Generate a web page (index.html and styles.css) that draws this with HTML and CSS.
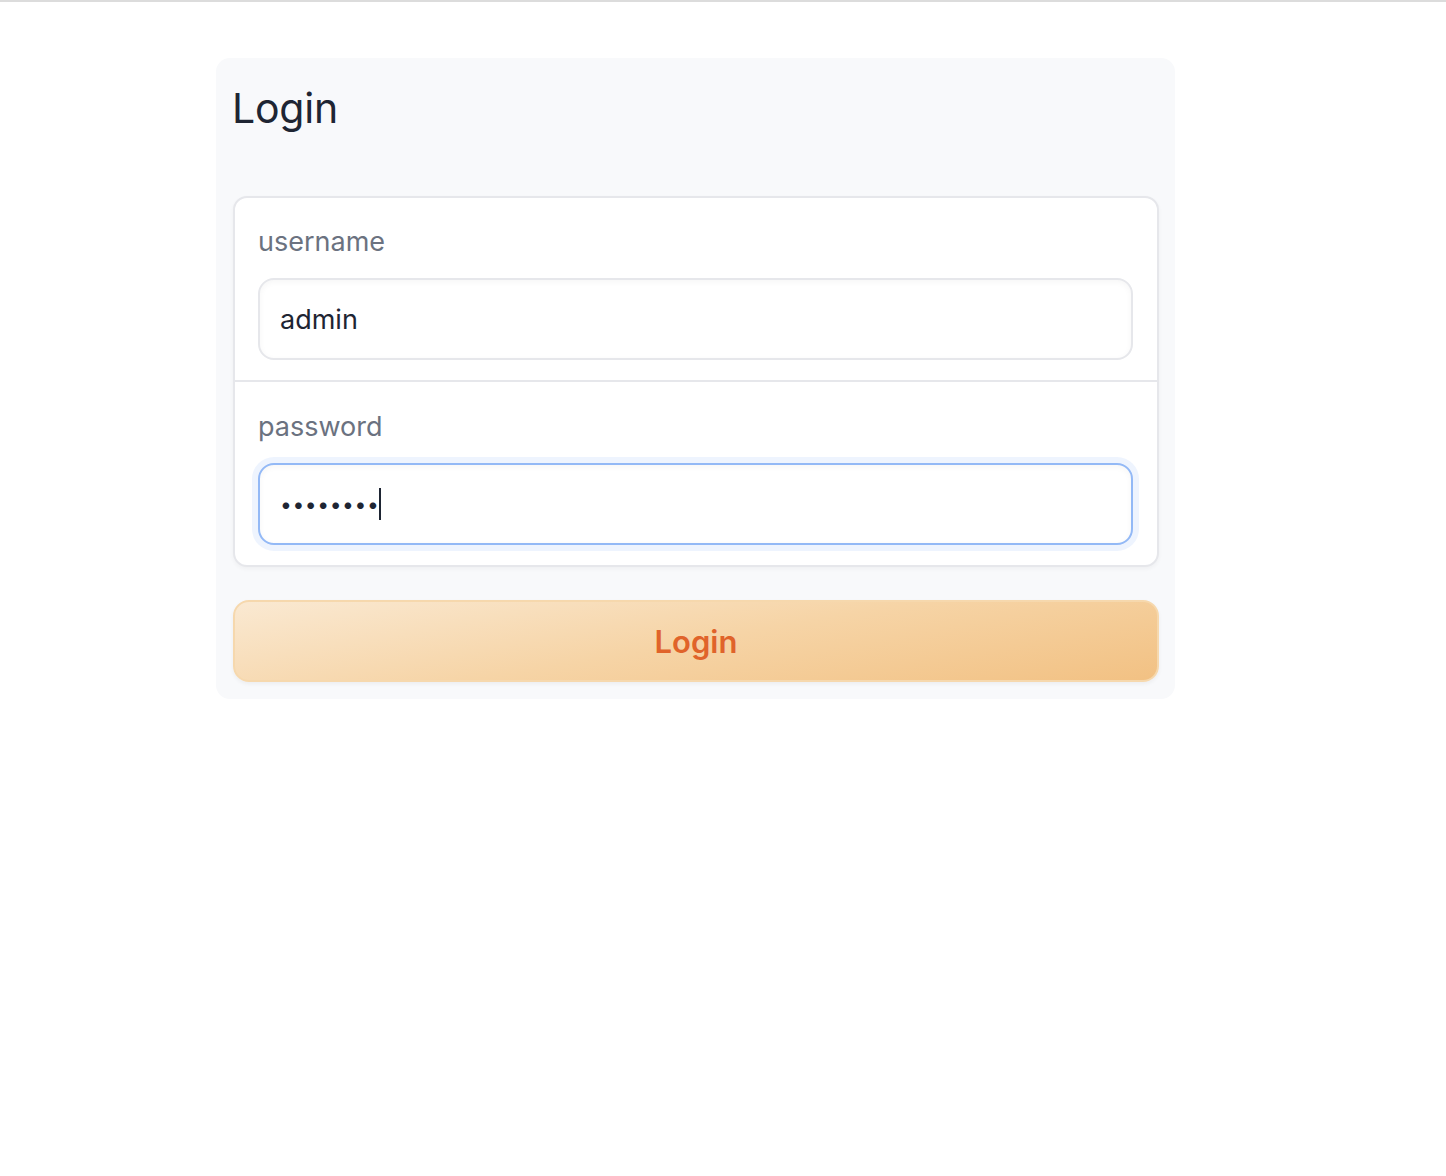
FILE: index.html
```html
<!DOCTYPE html>
<html lang="en">
<head>
<meta charset="utf-8">
<title>Login</title>
<link rel="stylesheet" href="styles.css">
</head>
<body>
<div class="topline"></div>
<main class="page">
  <section class="card">
    <h1 class="title">Login</h1>
    <form class="form">
      <div class="fields">
        <div class="field">
          <label class="label" for="u">username</label>
          <div class="input">admin</div>
        </div>
        <div class="field">
          <label class="label" for="p">password</label>
          <div class="input focused"><span class="dots">••••••••</span><span class="caret"></span></div>
        </div>
      </div>
      <button type="button" class="btn">Login</button>
    </form>
  </section>
</main>
</body>
</html>
```
FILE: styles.css
```css
* { box-sizing: border-box; }
html, body { margin: 0; padding: 0; background: #ffffff; }
body { font-family: Inter, "Noto Sans", sans-serif; color: #1f2937; }
.topline { height: 2px; background: #dcdcdc; }
.page { padding: 56px 0 0 216px; }
.card {
  width: 959px;
  background: #f8f9fb;
  border-radius: 14px;
  padding: 16px 16px 17px 16px;
}
.title {
  margin: 0;
  font-size: 41px;
  font-weight: 400;
  line-height: 68px;
  color: #1e2533;
  letter-spacing: -0.2px;
}
.form { margin-top: 54px; display: flex; flex-direction: column; gap: 33px; }
.fields {
  margin-left: 1px;
  background: #fff;
  border: 2px solid #e6e7eb;
  border-radius: 14px;
  box-shadow: 0 2px 4px rgba(0,0,0,0.04);
}
.field { padding: 26px 24px 20px 23px; }
.field + .field { border-top: 2px solid #e6e7eb; padding-top: 27px; }
.label {
  display: block;
  font-size: 27px;
  line-height: 36px;
  color: #6b7280;
  margin-bottom: 18px;
}
.input {
  height: 82px;
  border: 2px solid #e6e7eb;
  border-radius: 16px;
  background: #fff;
  box-shadow: inset 0 2px 6px rgba(0,0,0,0.04);
  padding: 0 20px;
  display: flex;
  align-items: center;
  font-size: 27px;
  color: #1e2533;
}
.input.focused {
  border-color: #93b9f6;
  box-shadow: 0 0 0 6px #eef4fe, inset 0 2px 6px rgba(0,0,0,0.04);
}
.dots { font-size: 21px; letter-spacing: 0.6px; }
.caret { display: inline-block; width: 2px; height: 32px; background: #1e2533; margin-left: 0; }
.btn {
  margin-left: 1px;
  width: 926px;
  height: 82px;
  border: 2px solid #f6d8ad;
  border-radius: 16px;
  background: linear-gradient(170deg, #fae9d2 0%, #f6d4a6 50%, #f2c183 100%);
  color: #e0632a;
  font-family: Inter, "Noto Sans", sans-serif;
  font-size: 31px;
  font-weight: 600;
  box-shadow: 0 2px 4px rgba(0,0,0,0.05);
  cursor: pointer;
}
```
